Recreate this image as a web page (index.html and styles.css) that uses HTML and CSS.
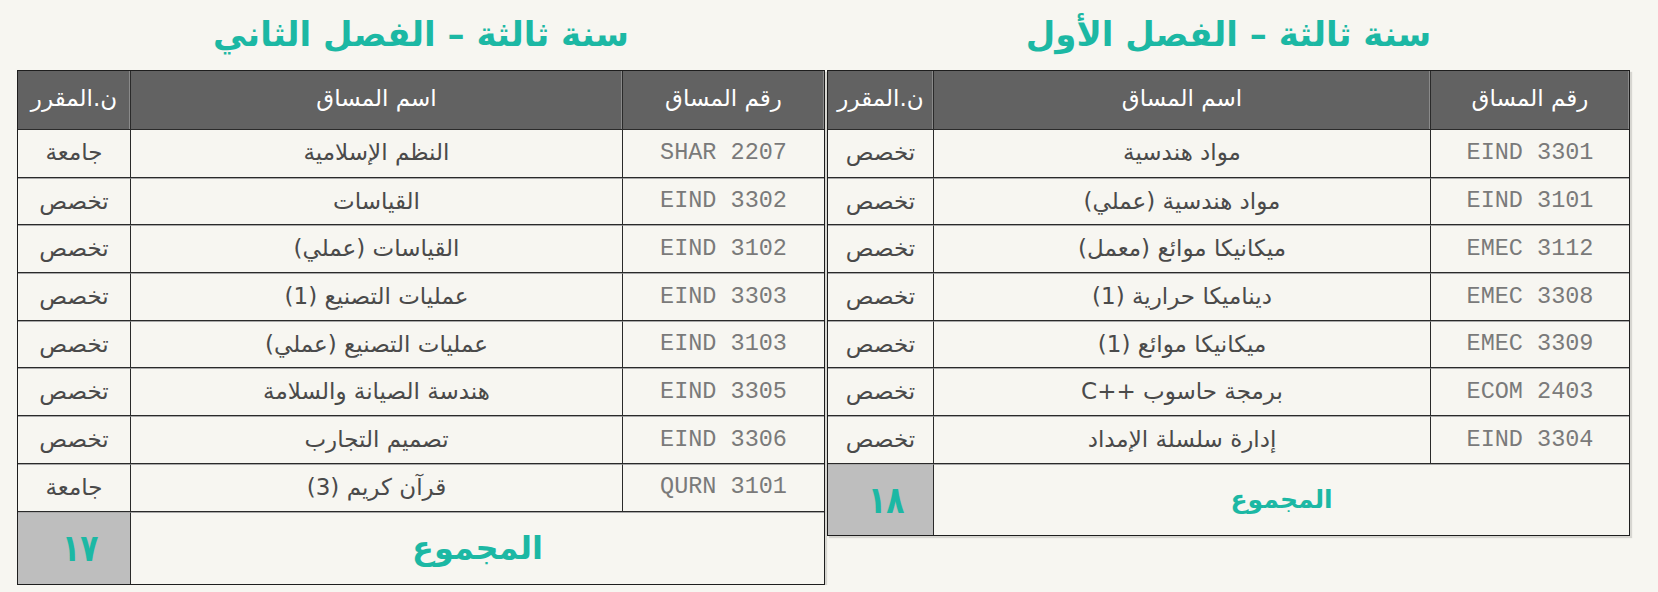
FILE: index.html
```html
<!DOCTYPE html>
<html lang="ar" dir="rtl">
<head>
<meta charset="utf-8">
<title>الخطة الدراسية - سنة ثالثة</title>
<link rel="stylesheet" href="styles.css">
</head>
<body>
<div class="page">
  <section class="sem sem-first">
    <h2 class="title">سنة ثالثة – الفصل الأول</h2>
    <table class="plan">
      <colgroup><col class="c-code"><col class="c-name"><col class="c-type"></colgroup>
      <thead>
        <tr><th>رقم المساق</th><th>اسم المساق</th><th>ن.المقرر</th></tr>
      </thead>
      <tbody>
        <tr><td class="code">EIND 3301</td><td>مواد هندسية</td><td>تخصص</td></tr>
        <tr><td class="code">EIND 3101</td><td>مواد هندسية (عملي)</td><td>تخصص</td></tr>
        <tr><td class="code">EMEC 3112</td><td>ميكانيكا موائع (معمل)</td><td>تخصص</td></tr>
        <tr><td class="code">EMEC 3308</td><td>ديناميكا حرارية (1)</td><td>تخصص</td></tr>
        <tr><td class="code">EMEC 3309</td><td>ميكانيكا موائع (1)</td><td>تخصص</td></tr>
        <tr><td class="code">ECOM 2403</td><td>برمجة حاسوب ++C</td><td>تخصص</td></tr>
        <tr><td class="code">EIND 3304</td><td>إدارة سلسلة الإمداد</td><td>تخصص</td></tr>
      </tbody>
      <tfoot>
        <tr class="sum sum-small"><td colspan="2" class="sum-label">المجموع</td><td class="sum-num"><span class="num">١٨</span></td></tr>
      </tfoot>
    </table>
  </section>
  <section class="sem sem-second">
    <h2 class="title">سنة ثالثة – الفصل الثاني</h2>
    <table class="plan">
      <colgroup><col class="c-code"><col class="c-name"><col class="c-type"></colgroup>
      <thead>
        <tr><th>رقم المساق</th><th>اسم المساق</th><th>ن.المقرر</th></tr>
      </thead>
      <tbody>
        <tr><td class="code">SHAR 2207</td><td>النظم الإسلامية</td><td>جامعة</td></tr>
        <tr><td class="code">EIND 3302</td><td>القياسات</td><td>تخصص</td></tr>
        <tr><td class="code">EIND 3102</td><td>القياسات (عملي)</td><td>تخصص</td></tr>
        <tr><td class="code">EIND 3303</td><td>عمليات التصنيع (1)</td><td>تخصص</td></tr>
        <tr><td class="code">EIND 3103</td><td>عمليات التصنيع (عملي)</td><td>تخصص</td></tr>
        <tr><td class="code">EIND 3305</td><td>هندسة الصيانة والسلامة</td><td>تخصص</td></tr>
        <tr><td class="code">EIND 3306</td><td>تصميم التجارب</td><td>تخصص</td></tr>
        <tr><td class="code">QURN 3101</td><td>قرآن كريم (3)</td><td>جامعة</td></tr>
      </tbody>
      <tfoot>
        <tr class="sum sum-big"><td colspan="2" class="sum-label">المجموع</td><td class="sum-num"><span class="num">١٧</span></td></tr>
      </tfoot>
    </table>
  </section>
</div>
</body>
</html>
```
FILE: styles.css
```css
html, body {
  margin: 0;
  padding: 0;
  background: #f7f6f1;
}
body {
  font-family: "DejaVu Sans", "Noto Sans", sans-serif;
  color: #444;
}
.page {
  display: flex;
  flex-direction: row;
  align-items: flex-start;
  padding: 0 28px 0 17px;
  gap: 2px;
}
.sem-first { width: 803px; }
.sem-second { width: 808px; }
.title {
  margin: 0;
  height: 70px;
  display: flex;
  align-items: center;
  justify-content: center;
  padding-bottom: 2px;
  box-sizing: border-box;
  font-size: 34px;
  font-weight: bold;
  color: #1cb8a4;
}
.plan {
  width: 100%;
  border-collapse: separate;
  border-spacing: 0;
  border: 1px solid #1e1e1e;
  box-shadow: 2px 2px 1px rgba(0,0,0,0.13);
  table-layout: fixed;
}
.sem-first .c-code { width: 199px; }
.sem-first .c-type { width: 105px; }
.sem-second .c-code { width: 202px; }
.sem-second .c-type { width: 112px; }
.plan th {
  background: #626262;
  color: #fff;
  font-weight: normal;
  font-size: 23px;
  height: 54px;
  padding: 0 4px 4px;
  border-bottom: 1px solid #2a2a2a;
  border-left: 1px solid #2a2a2a;
  box-shadow: inset -1px 0 0 #8a8a8a;
}
.plan th:last-child, .plan td:last-child { border-left: none; }
.plan td {
  height: 44.7px;
  padding: 0 4px 1px;
  text-align: center;
  font-size: 23px;
  color: #4a4a4a;
  border-left: 1px solid #2a2a2a;
  border-bottom: 1px solid #2a2a2a;
  border-top: 1px solid #a8a8a8;
  line-height: 1;
}
.plan tbody tr:first-child td { border-top: none; height: 45.7px; }
.plan td.code {
  font-family: "Liberation Mono", "Courier New", monospace;
  font-size: 23.5px;
  color: #7a7a7a;
}
.plan tfoot td {
  border-bottom: none;
  border-top: 1px solid #a8a8a8;
  padding: 0 4px;
  font-weight: bold;
  color: #1cb8a4;
}
.plan .sum-small td { height: 70px; }
.plan .sum-big td { height: 71px; }
.plan td.sum-num {
  background: #bebebe;
  padding-left: 16px;
  font-size: 38px;
}
.num {
  display: inline-block;
  transform: scaleX(0.78);
}
.plan .sum-small .sum-label { font-size: 25px; }
.plan .sum-big .sum-label { font-size: 32px; }
```
